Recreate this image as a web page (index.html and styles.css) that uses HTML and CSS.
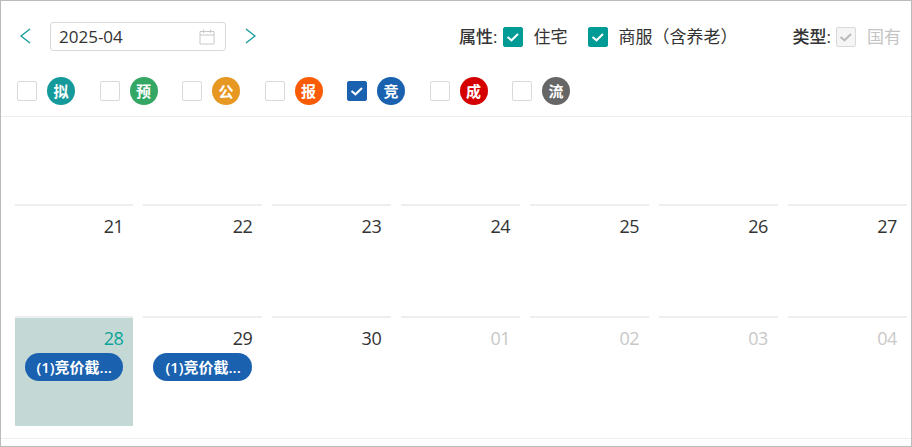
FILE: index.html
```html
<!DOCTYPE html>
<html lang="zh-CN">
<head>
  <meta charset="UTF-8">
  <title>Calendar</title>
  <link rel="stylesheet" href="styles.css">
</head>
<body>
<div class="frame">
  <div class="toolbar">
    <div class="month-nav">
      <svg class="chevron" width="12" height="16" viewBox="0 0 12 16"><path d="M11 1 L2 8 L11 15"></path></svg>
      <div class="date-input">
        <span>2025-04</span>
        <svg class="cal-icon" width="16" height="16" viewBox="0 0 16 16"><path d="M1 2.500 H15 V15 H1 Z M1 6 H15 M4.500 .5 V4 M11.500 .5 V4"></path></svg>
      </div>
      <svg class="chevron" width="12" height="16" viewBox="0 0 12 16"><path d="M1 1 L10 8 L1 15"></path></svg>
    </div>
    <div class="filters">
      <span class="filter-label">属性:</span>
      <span class="check teal"><svg width="20" height="20" viewBox="0 0 20 20"><path d="M4.500 10 L8.500 13.300 L15 7"></path></svg></span>
      <span class="check-text first">住宅</span>
      <span class="check teal"><svg width="20" height="20" viewBox="0 0 20 20"><path d="M4.500 10 L8.500 13.300 L15 7"></path></svg></span>
      <span class="check-text">商服（含养老）</span>
      <span class="filter-label type-label">类型:</span>
      <span class="check disabled"><svg width="20" height="20" viewBox="0 0 20 20"><path d="M4.500 10 L8.500 13.300 L15 7"></path></svg></span>
      <span class="check-text muted">国有</span>
    </div>
  </div>

  <div class="legend">
    <div class="legend-item"><span class="check"></span><span class="dot c-ni">拟</span></div>
    <div class="legend-item"><span class="check"></span><span class="dot c-yu">预</span></div>
    <div class="legend-item"><span class="check"></span><span class="dot c-gong">公</span></div>
    <div class="legend-item"><span class="check"></span><span class="dot c-bao">报</span></div>
    <div class="legend-item"><span class="check blue"><svg width="20" height="20" viewBox="0 0 20 20"><path d="M4.500 10 L8.500 13.300 L15 7"></path></svg></span><span class="dot c-jing">竞</span></div>
    <div class="legend-item"><span class="check"></span><span class="dot c-cheng">成</span></div>
    <div class="legend-item"><span class="check"></span><span class="dot c-liu">流</span></div>
  </div>

  <div class="calendar">
    <div class="week week-top">
      <div class="day"></div><div class="day"></div><div class="day"></div><div class="day"></div><div class="day"></div><div class="day"></div><div class="day"></div>
    </div>
    <div class="week">
      <div class="day"><div class="num">21</div></div>
      <div class="day"><div class="num">22</div></div>
      <div class="day"><div class="num">23</div></div>
      <div class="day"><div class="num">24</div></div>
      <div class="day"><div class="num">25</div></div>
      <div class="day"><div class="num">26</div></div>
      <div class="day"><div class="num">27</div></div>
    </div>
    <div class="week">
      <div class="day today"><div class="num">28</div><div class="pill">(1)竞价截...</div></div>
      <div class="day"><div class="num">29</div><div class="pill">(1)竞价截...</div></div>
      <div class="day"><div class="num">30</div></div>
      <div class="day other"><div class="num">01</div></div>
      <div class="day other"><div class="num">02</div></div>
      <div class="day other"><div class="num">03</div></div>
      <div class="day other"><div class="num">04</div></div>
    </div>
  </div>
</div>
</body>
</html>
```

FILE: styles.css
```css
* {
  box-sizing: border-box;
}
html, body {
  margin: 0;
  padding: 0;
  background: #fff;
}
body {
  font-family: "Open Sans", "Noto Sans CJK SC", sans-serif;
  color: #333;
}
.frame {
  width: 912px;
  height: 447px;
  border: 1px solid #bbb;
  overflow: hidden;
}

/* top row */
.toolbar {
  display: flex;
  align-items: center;
  justify-content: space-between;
  height: 70px;
  padding: 1px 10px 0 18px;
}
.month-nav {
  display: flex;
  align-items: center;
}
.chevron {
  margin-bottom: 1px;
  fill: none;
  stroke: #159a9c;
  stroke-width: 1.3;
}
.date-input {
  display: flex;
  align-items: center;
  justify-content: space-between;
  width: 176px;
  height: 29px;
  margin: 0 19px;
  padding: 0 10px 0 8px;
  border: 1px solid #d9d9d9;
  border-radius: 3px;
  font-size: 17px;
}
.cal-icon {
  fill: none;
  stroke: #c8c8c8;
  stroke-width: 1;
}
.filters {
  display: flex;
  align-items: center;
  font-size: 17px;
  line-height: 22px;
}
.filter-label {
  margin-right: 5px;
  font-weight: 500;
  white-space: nowrap;
}
.type-label {
  margin-left: 55px;
}
.check {
  display: block;
  flex: none;
  width: 20px;
  height: 20px;
  border: 1px solid #d9d9d9;
  border-radius: 2px;
  background: #fff;
}
.check svg {
  display: block;
  margin: -1px;
  fill: none;
  stroke: #fff;
  stroke-width: 2;
}
.check.teal {
  background: #009b95;
  border-color: #009b95;
}
.check.blue {
  background: #1a62b0;
  border-color: #1a62b0;
}
.check.disabled {
  background: #f5f5f5;
}
.check.disabled svg {
  stroke: #bbb;
}
.check-text {
  margin-left: 11px;
  white-space: nowrap;
}
.check-text.first {
  margin-right: 20px;
}
.check-text.muted {
  color: #c4c4c4;
}

/* status legend */
.legend {
  display: flex;
  align-items: center;
  height: 46px;
  padding: 0 0 5px 16px;
  border-bottom: 1px solid #eee;
}
.legend-item {
  display: flex;
  align-items: center;
  width: 82.500px;
}
.dot {
  width: 28px;
  height: 28px;
  margin-left: 10px;
  border-radius: 50%;
  color: #fff;
  font-size: 15px;
  font-weight: 700;
  line-height: 28px;
  text-align: center;
}
.c-ni { background: #159a9c; }
.c-yu { background: #33a763; }
.c-gong { background: #e69823; }
.c-bao { background: #fa5c05; }
.c-jing { background: #1a62b0; }
.c-cheng { background: #d40000; }
.c-liu { background: #666; }

/* calendar */
.calendar {
  height: 322px;
  padding: 0 4.200px 0 13.500px;
  border-bottom: 1px solid #eee;
}
.week {
  display: grid;
  grid-template-columns: repeat(7, minmax(0, 1fr));
  column-gap: 10px;
  height: 112px;
}
.week-top {
  height: 87px;
}
.week-top .day {
  height: 87px;
  border-top: 0;
}
.day {
  height: 110px;
  border-top: 2px solid #eee;
  padding: 0 10px;
}
.num {
  margin-top: 7px;
  font-size: 18px;
  letter-spacing: -0.5px;
  line-height: 26px;
  text-align: right;
}
.today {
  background: #c4d8d5;
}
.today .num {
  color: #0aa59a;
}
.other .num {
  color: #c8c8c8;
}
.pill {
  height: 28px;
  margin-top: 2px;
  padding: 0 12px;
  border-radius: 14px;
  background: #1a62b0;
  color: #fff;
  font-size: 15px;
  font-weight: 600;
  line-height: 28px;
  white-space: nowrap;
}
```
